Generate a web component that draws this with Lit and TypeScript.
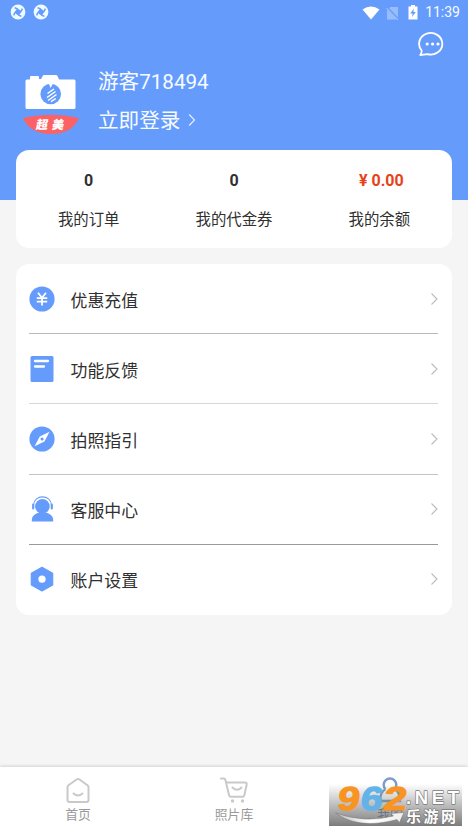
import { LitElement, html, css, svg } from "lit";
import { customElement } from "lit/decorators.js";

const icons = {
  recharge: svg`<circle cx="13" cy="13" r="12.6" fill="#659cfc"/><path d="M9 6.800l4 5 4-5M7.800 12.200h10.400M7.800 15.600h10.400M13 12v7.500" fill="none" stroke="#fff" stroke-width="1.800"/>`,
  feedback: svg`<rect x="1.500" y="0" width="23" height="26" rx="1.600" fill="#659cfc"/><path d="M6 5h13M6 10.500h9" stroke="#fff" stroke-width="2.300" stroke-linecap="round"/>`,
  guide: svg`<circle cx="13" cy="13" r="12.600" fill="#659cfc"/><path d="M20.600 5.800L15.400 15.600L5.600 20.200L10.800 10.500Z" fill="#fff"/><circle cx="13.100" cy="13" r="1.600" fill="#659cfc"/>`,
  service: svg`<circle cx="13.400" cy="10.300" r="7.300" fill="#659cfc"/><path d="M2.800 25.500v-1.500c0-4.500 4-6.500 7-7.500h7.400c3 1 7 3 7 7.500v1.500z" fill="#659cfc"/><path d="M4.500 9C5 3.500 9 .9 13.500.9S22 3.500 22.500 9" fill="none" stroke="#659cfc" stroke-width="1.100"/><path d="M4.200 8.500v4M22.800 8.500v4" stroke="#659cfc" stroke-width="2.200" stroke-linecap="round"/>`,
  settings: svg`<path d="M13 1.300L23.700 7.200V19L13 24.900L2.300 19V7.200Z" fill="#659cfc" stroke="#659cfc" stroke-width="1.200" stroke-linejoin="round"/><circle cx="13" cy="13.200" r="3.600" fill="#fff"/>`,
};

const rows = [
  { icon: icons.recharge, label: "优惠充值", line: "a" },
  { icon: icons.feedback, label: "功能反馈", line: "b" },
  { icon: icons.guide, label: "拍照指引", line: "c" },
  { icon: icons.service, label: "客服中心", line: "d" },
  { icon: icons.settings, label: "账户设置", line: "" },
];

const swirl = html`<svg class="swirl" width="16" height="16" viewBox="0 0 16 16">
  <circle cx="8" cy="8" r="7.400" fill="#effcff"/>
  <path d="M7.500 4.300L11.700 7.500L8.500 11.700L4.300 8.500Z" fill="#659cfc"/>
  <path d="M7.500 5L4.600 3.600M11 7.500L12.400 4.600M8.500 11L11.400 12.400M5 8.500L3.600 11.400" stroke="#659cfc" stroke-width="1.500"/>
</svg>`;

@customElement("app-root")
export class AppRoot extends LitElement {
  static styles = css`
    :host {
      display: block;
      width: 468px;
      height: 832px;
      overflow: hidden;
      background: #fff;
      color: #303030;
      font-family: Roboto, "Noto Sans CJK SC", sans-serif;
    }
    svg { display: block; flex: none; }
    .page { height: 767px; background: #f5f5f5; overflow: hidden; }
    .hero { height: 200px; background: #659cfc; color: #f7fbff; overflow: hidden; }
    .status { display: flex; align-items: center; height: 25px; padding: 0 8px 0 9.500px; }
    .swirl { margin-right: 7.500px; margin-top: -1px; }
    .space { flex: 1; }
    .wifi { margin-right: 6px; }
    .sim { margin-right: 9px; }
    .battery { margin-right: 7px; }
    .time { font-size: 14px; line-height: 25px; }
    .tools { display: flex; justify-content: flex-end; height: 39px; padding: 6px 22px 0 0; box-sizing: border-box; }
    .profile { display: flex; padding-left: 22px; }
    .badge { margin-top: 9px; }
    .who { margin-left: 18px; font-size: 20.600px; }
    .name { height: 34px; line-height: 34px; margin-top: 1px; }
    .login { display: flex; align-items: center; height: 34px; margin-top: 5px; line-height: 34px; }
    .login svg { margin: -2px 0 0 8px; }
    .card { margin: 0 16px; background: #fff; border-radius: 13px; }
    .stats { display: grid; grid-template-columns: repeat(3, 1fr); height: 98px; margin-top: -50px; text-align: center; padding: 0; box-sizing: border-box; }
    .value { margin-top: 20px; height: 22px; line-height: 22px; font-size: 16px; font-weight: 700; }
    .money { color: #e84118; padding-left: 4px; }
    .caption { margin-top: 16px; height: 24px; line-height: 24px; font-size: 15.400px; }
    .list { margin-top: 16px; height: 351px; padding: 0 14.500px 0 12.500px; box-sizing: border-box; }
    .row { display: flex; align-items: center; height: 70.200px; box-sizing: border-box; border-bottom: 1px solid transparent; }
    .row span { flex: 1; margin-left: 16px; font-size: 16.900px; padding-top: 1px; }
    .a { border-color: #b9b9b9; }
    .b { border-color: #d8d8d8; }
    .c { border-color: #c4c4c4; }
    .d { border-color: #999; }
    .tabs { position: relative; display: grid; grid-template-columns: repeat(3, 1fr); height: 65px; background: #fff; box-shadow: 0 -1px 3px rgba(0, 0, 0, 0.14); }
    .tab { display: flex; flex-direction: column; align-items: center; padding-top: 9px; font-size: 12.800px; line-height: 18px; color: #999; }
    .tab span { margin-top: 2px; }
    .on { color: #5478ae; }
    .mark { position: absolute; left: 329px; top: 17px; overflow: visible; }
    .mark text { font-family: "Liberation Sans", "Noto Sans CJK SC", sans-serif; font-weight: 700; }
    .mark .cjk { font-family: "Noto Sans CJK SC", sans-serif; }
    .ribbon { font-family: "Noto Sans CJK SC", sans-serif; font-weight: 900; }
  `;

  render() {
    return html`
      <div class="page">
        <div class="hero">
          <div class="status">
            ${swirl}${swirl}
            <div class="space"></div>
            <svg class="wifi" width="18" height="14" viewBox="0 0 18 14"><path d="M.5 3.500Q9-2.500 17.500 3.500L9 13.500Z" fill="#fff"/></svg>
            <svg class="sim" width="13" height="14" viewBox="0 0 13 14"><path d="M4.500 1H12V13.500H1V4.500Z" fill="#98bdfd"/><path d="M.5 1L12.500 13.500" stroke="#659cfc" stroke-width="2.200"/><path d="M.5 2L12 13.800" stroke="#a9c8fd" stroke-width="1"/></svg>
            <svg class="battery" width="10" height="15" viewBox="0 0 10 15"><path d="M3 0H7V1.500H9.500V14.500H.5V1.500H3Z" fill="#fff"/><path d="M6 3.500L2.200 8.500H4.600L4 12L7.800 7H5.400Z" fill="#659cfc"/></svg>
            <div class="time">11:39</div>
          </div>
          <div class="tools">
            <svg width="28" height="26" viewBox="0 0 28 26"><path d="M2.300 24C3 22.500 4 21.500 3.600 19.500A11.600 10.800 0 1 1 9.500 23.200Q5.500 23.800 2.300 24Z" fill="none" stroke="#fff" stroke-width="1.800" stroke-linejoin="round"/><g fill="#fff"><circle cx="9.200" cy="13" r="1.600"/><circle cx="14.600" cy="13" r="1.600"/><circle cx="20" cy="13" r="1.600"/></g></svg>
          </div>
          <div class="profile">
            <svg class="badge" width="58" height="62" viewBox="0 0 58 62">
              <path d="M5 6.500H8V4Q8 3 9 3H16Q17 3 17 4V6H19L21 2.500Q21.500 2 22 2H34Q35 2 35.500 3L37 6.500H52Q53.500 6.500 53.500 8V34.500Q53.500 36 52 36H5Q3.500 36 3.500 34.500V8Q3.500 6.500 5 6.500Z" fill="#fff"/>
              <circle cx="28.700" cy="21" r="10.300" fill="#659cfc"/>
              <path d="M26.500 10L28.700 15L31 10Z" fill="#fff"/>
              <path d="M25.500 20.500L32 16M25 24.500L33.500 18.500M26 27.500L34.500 21.500M29 28.700L33.800 25.500" stroke="#fff" stroke-width="1.500"/>
              <path d="M1 45Q29 38.500 57 45Q50 61 29 61Q8 61 1 45Z" fill="#fb6266"/>
              <text class="ribbon" x="14" y="56.500" font-size="12" letter-spacing="4" fill="#fff" transform="translate(8.500 0) skewX(-9)">超美</text>
            </svg>
            <div class="who">
              <div class="name">游客718494</div>
              <div class="login">立即登录<svg width="8" height="14" viewBox="0 0 8 14"><path d="M1.200 1.500L6.500 7L1.200 12.500" fill="none" stroke="#e4eeff" stroke-width="1.200"/></svg></div>
            </div>
          </div>
        </div>
        <div class="card stats">
          <div><div class="value">0</div><div class="caption">我的订单</div></div>
          <div><div class="value">0</div><div class="caption">我的代金券</div></div>
          <div><div class="value money">¥ 0.00</div><div class="caption">我的余额</div></div>
        </div>
        <div class="card list">
          ${rows.map(
            (r) => html`<div class="row ${r.line}">
              <svg width="26" height="26" viewBox="0 0 26 26">${r.icon}</svg>
              <span>${r.label}</span>
              <svg width="8" height="14" viewBox="0 0 8 14"><path d="M1.500 1.500L7 7L1.500 12.500" fill="none" stroke="#bcbcbc" stroke-width="1.100"/></svg>
            </div>`
          )}
        </div>
      </div>
      <div class="tabs">
        <div class="tab">
          <svg width="28" height="28" viewBox="0 0 28 28"><path d="M3.500 11Q3.500 10 4.500 9.200L12.500 3.500Q14 2.400 15.500 3.500L23.500 9.200Q24.500 10 24.500 11V24Q24.500 26 22.500 26H5.500Q3.500 26 3.500 24ZM9.500 17.500Q14 21.500 18.500 17.500" fill="none" stroke="#c9c9c9" stroke-width="2" stroke-linecap="round"/></svg>
          <span>首页</span>
        </div>
        <div class="tab">
          <svg width="28" height="28" viewBox="0 0 28 28"><path d="M1 2.500H3.800Q5 2.500 5.400 4L9 19Q9.300 20.800 11 20.800H22.500Q24 20.800 24.400 19L26.700 8.500Q27 6.500 25 6.500H7M12.500 11.500Q17 16 21.500 11.500" fill="none" stroke="#c9c9c9" stroke-width="2" stroke-linecap="round"/><circle cx="12.500" cy="25" r="1.700" fill="#c9c9c9"/><circle cx="22.500" cy="25" r="1.700" fill="#c9c9c9"/></svg>
          <span>照片库</span>
        </div>
        <div class="tab on">
          <svg width="28" height="28" viewBox="0 0 28 28"><path d="M9.500 13.200A6.300 6.300 0 1 1 18.500 13.200Q24 16 24 25H4Q4 16 9.500 13.200" fill="none" stroke="#7c9bc9" stroke-width="2.400"/></svg>
          <span>我的</span>
        </div>
        <svg class="mark" width="133" height="42" viewBox="0 0 133 42">
          <defs>
            <linearGradient id="fade" x2="0" y2="1"><stop offset="0" stop-color="#777" stop-opacity="0"/><stop offset=".5" stop-color="#777" stop-opacity=".48"/><stop offset="1" stop-color="#707070" stop-opacity=".92"/></linearGradient>
            <linearGradient id="swoosh"><stop offset="0" stop-color="#bbb"/><stop offset=".5" stop-color="#fff"/><stop offset="1" stop-color="#eee"/></linearGradient>
          </defs>
          <rect width="133" height="42" fill="url(#fade)"/>
          <path d="M6.500 29Q36 39.500 64.500 32L62 29.500L75 28.500L70.500 38.500L68 35.500Q30 46 6.500 29Z" fill="url(#swoosh)" stroke="#777" stroke-width=".5"/>
          <g transform="translate(7.500 26) skewX(-8)" font-size="33" stroke-width="1.200" stroke-linejoin="round">
            <text x="0" y="0" fill="#f89423" stroke="#f89423" textLength="22" lengthAdjust="spacingAndGlyphs">9</text>
            <text x="23" y="0" fill="#63b3e8" stroke="#63b3e8" textLength="22" lengthAdjust="spacingAndGlyphs">6</text>
            <text x="46" y="0" fill="#f89423" stroke="#f89423" textLength="23" lengthAdjust="spacingAndGlyphs">2</text>
          </g>
          <g fill="#fff" stroke="#777" stroke-width="1.300" paint-order="stroke" stroke-linejoin="round">
            <text x="77" y="20" font-size="18.500" textLength="53" lengthAdjust="spacing">.NET</text>
            <text class="cjk" x="77" y="38" font-size="15" textLength="50">乐游网</text>
          </g>
        </svg>
      </div>
    `;
  }
}
